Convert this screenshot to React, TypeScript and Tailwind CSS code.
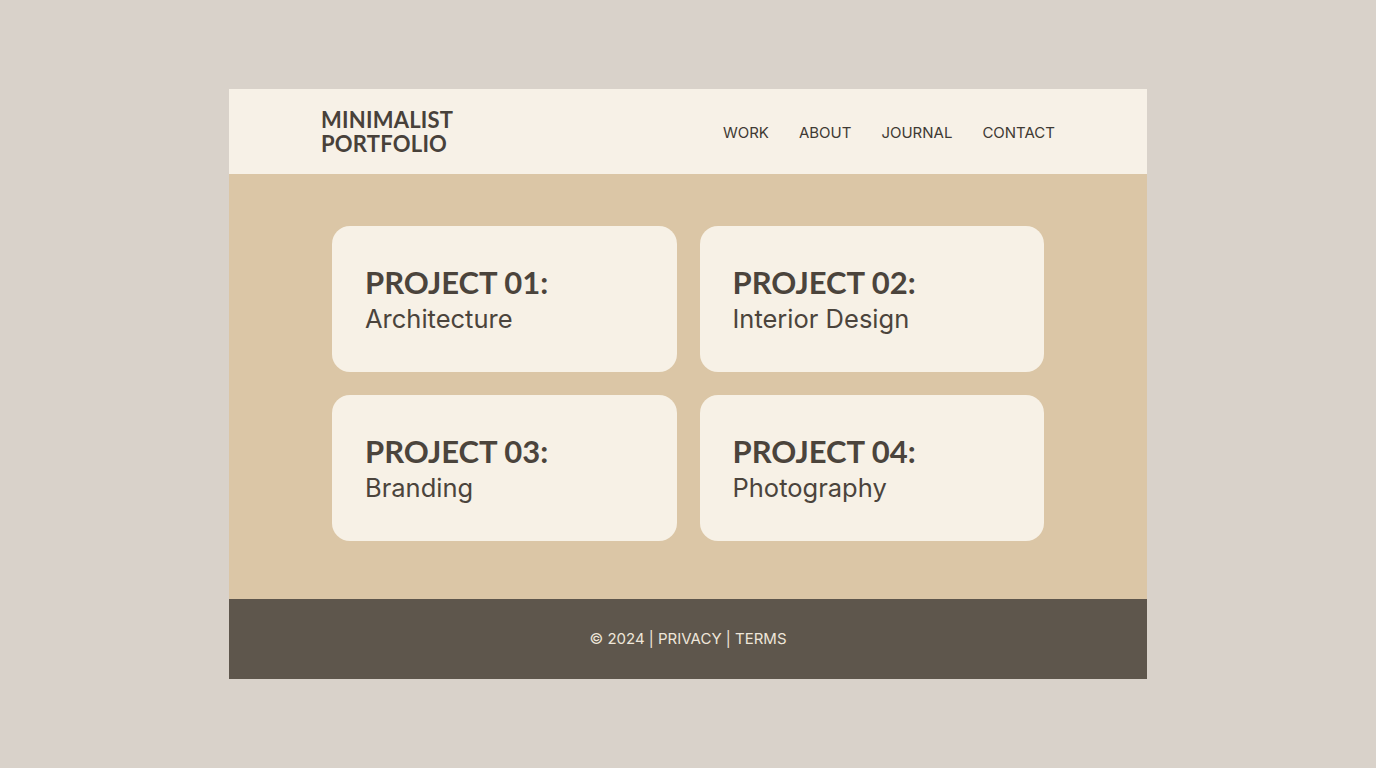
import React from 'react'

const projects = [
  { no: '01', name: 'Architecture' },
  { no: '02', name: 'Interior Design' },
  { no: '03', name: 'Branding' },
  { no: '04', name: 'Photography' },
]

const nav = ['WORK', 'ABOUT', 'JOURNAL', 'CONTACT']

export default function App() {
  return (
    <div className="h-screen w-full flex items-center justify-center bg-[#d9d2ca]">
      <div className="w-[918px] flex flex-col">
        <header className="h-[85px] bg-[#f7f1e7] flex items-center justify-between px-[92px]">
          <div className="flex flex-col font-['Lato',sans-serif] font-bold text-[22px] leading-[24px] text-[#48413a] tracking-[0.01em] pt-[1px]">
            <span>MINIMALIST</span>
            <span>PORTFOLIO</span>
          </div>
          <nav className="flex gap-[30px] font-['Inter',sans-serif] text-[15px] text-[#3f3a34] pt-[3px]">
            {nav.map((n) => (
              <span key={n}>{n}</span>
            ))}
          </nav>
        </header>
        <main className="h-[425px] bg-[#dbc6a6] pt-[52px] px-[103px]">
          <div className="grid grid-cols-2 gap-[23px]">
            {projects.map((p) => (
              <div key={p.no} className="h-[146px] rounded-[18px] bg-[#f7f1e6] px-[33px] flex flex-col justify-center">
                <div className="font-['Lato',sans-serif] font-bold text-[31px] leading-[36px] text-[#4b443c] pt-[2px]">
                  PROJECT {p.no}:
                </div>
                <div className="font-['Inter',sans-serif] text-[25.5px] leading-[36px] text-[#4b443c] mt-[1px]">
                  {p.name}
                </div>
              </div>
            ))}
          </div>
        </main>
        <footer className="h-[80px] bg-[#5e564c] flex items-center justify-center font-['Inter',sans-serif] text-[15px] text-[#eee6da] pt-[1px]">
          © 2024 | PRIVACY | TERMS
        </footer>
      </div>
    </div>
  )
}
